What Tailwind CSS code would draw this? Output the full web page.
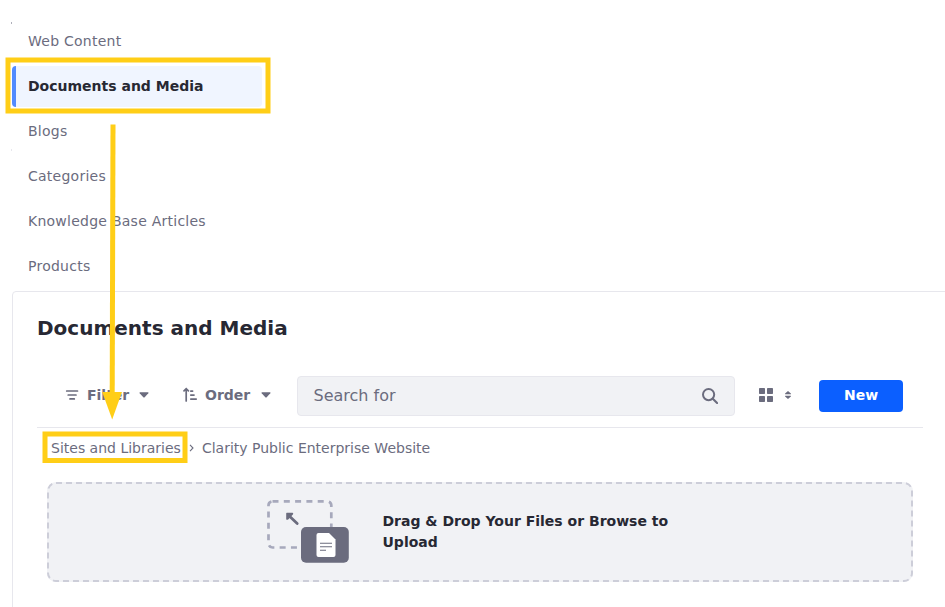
<!DOCTYPE html>
<html lang="en">
<head>
<meta charset="utf-8">
<title>Documents and Media</title>
<script src="https://cdn.jsdelivr.net/npm/@tailwindcss/browser@4"></script>
</head>
<body class="relative h-[607px] w-[945px] overflow-hidden bg-white font-['DejaVu_Sans',sans-serif] text-sm text-[#6b6c7e]">
<nav class="flex flex-col gap-1 pl-3 pt-[21px] tracking-[0.25px]">
  <a class="flex h-[41px] w-[250px] items-center pb-[2px] pl-4">Web Content</a>
  <a class="flex h-[41px] w-[250px] items-center rounded-[4px] border-l-4 border-[#528bff] bg-[#f0f5ff] pb-[2px] pl-3 font-bold tracking-normal text-[#272833]">Documents and Media</a>
  <a class="flex h-[41px] w-[250px] items-center pb-[2px] pl-4">Blogs</a>
  <a class="flex h-[41px] w-[250px] items-center pb-[2px] pl-4">Categories</a>
  <a class="flex h-[41px] w-[250px] items-center pb-[2px] pl-4">Knowledge Base Articles</a>
  <a class="flex h-[41px] w-[250px] items-center pb-[2px] pl-4">Products</a>
</nav>
<main class="ml-3 mt-[4px] h-[330px] w-[960px] rounded-tl-[4px] border border-[#e7e7ed] pl-6 pt-6">
  <h1 class="h-6 text-xl leading-6 font-bold text-[#272833]">Documents and Media</h1>
  <div class="mt-9 flex h-[52px] w-[886px] items-start border-b border-[#e7e7ed] pl-[28px] font-bold">
    <button class="flex h-[38px] w-[118px] items-center">
      <svg class="h-[14px] w-[14px]" viewBox="0 0 14 14" fill="none" stroke="#6b6c7e" stroke-width="1.700" stroke-linecap="round"><path d="M1.700 3h10.800M3.200 7h7.800M5 10.900h4.300"/></svg>
      <span class="ml-2">Filter</span>
      <svg class="ml-[10px] h-[6px] w-[10px]" viewBox="0 0 10 6"><path d="M1 .2h8q.9.2.3 1.100L5.700 5.300q-.7.6-1.400 0L.7 1.300Q.1.400 1 .2z" fill="#6b6c7e"/></svg>
    </button>
    <button class="flex h-[38px] w-[114px] items-center">
      <svg class="h-4 w-[15px]" viewBox="0 0 15 16" fill="none" stroke="#6b6c7e" stroke-width="1.700" stroke-linecap="round"><path d="M3.200 14V2M1 3.800 3.200 1.700 5.400 3.800M7.800 4.100h1.800M7.800 8.100h3.200M7.800 12.100h5.400"/></svg>
      <span class="ml-[7px]">Order</span>
      <svg class="ml-[11px] h-[6px] w-[10px]" viewBox="0 0 10 6"><path d="M1 .2h8q.9.2.3 1.100L5.700 5.300q-.7.6-1.400 0L.7 1.300Q.1.400 1 .2z" fill="#6b6c7e"/></svg>
    </button>
    <div class="flex h-10 w-[438px] items-center justify-between rounded-[4px] border border-[#e7e7ed] bg-[#f1f2f5] pl-[15.5px] pr-4 text-base font-normal">
      <span>Search for</span>
      <svg class="h-4 w-4" viewBox="0 0 16 16" fill="none" stroke="#6b6c7e"><circle cx="6.600" cy="6.600" r="5.600" stroke-width="2"/><path d="m10.800 10.800 4.300 4.300" stroke-width="2.100" stroke-linecap="round"/></svg>
    </div>
    <svg class="ml-6 mt-3 h-[14px] w-[14px]" viewBox="0 0 14 14" fill="#6b6c7e"><rect width="6" height="6" rx=".7"/><rect x="8" width="6" height="6" rx=".7"/><rect y="8" width="6" height="6" rx=".7"/><rect x="8" y="8" width="6" height="6" rx=".7"/></svg>
    <svg class="ml-3 mt-[15px] h-2 w-[6px]" viewBox="0 0 6 8" fill="#6b6c7e"><path d="M3 0 .1 2.600q-.2.6.3.6h5.200q.5 0 .3-.6zM3 8 .1 5.400q-.2-.6.3-.6h5.200q.5 0 .3.6z"/></svg>
    <button class="ml-7 mt-1 flex h-8 w-[84px] items-center justify-center rounded-[4px] bg-[#0b5fff] pb-[2px] text-sm text-white">New</button>
  </div>
  <div class="flex h-10 items-center pl-[14px]">
    <span>Sites and Libraries</span>
    <svg class="ml-2 h-2 w-[5px]" viewBox="0 0 5 8" fill="none" stroke="#6b6c7e" stroke-width="1.1"><path d="m1 .8 3 3.2-3 3.2"/></svg>
    <span class="ml-2">Clarity Public Enterprise Website</span>
  </div>
  <section class="relative ml-[10px] mt-[14px] flex h-[100px] w-[866px] items-start rounded-[9px] bg-[#f1f2f5]">
    <svg class="absolute inset-0 h-[100px] w-[866px]" fill="none" stroke="#cdced9" stroke-width="2"><rect x="1" y="1" width="864" height="98" rx="8" stroke-dasharray="6 4"/></svg>
    <svg class="ml-[218px] mt-[16px] h-[68px] w-[86px]" viewBox="265 498 86 68">
      <rect x="268.500" y="501.300" width="62.800" height="46.200" rx="4" fill="none" stroke="#a7a9bc" stroke-width="2.700" stroke-dasharray="6 5.300"/>
      <path d="m289 515.800 8.200 7.700" stroke="#6b6c7e" stroke-width="2.800" stroke-linecap="round"/><path d="M286.800 512.800h5.800q1.200.6.300 1.700l-4.700 4.900q-1.400 1-2-.2v-5.600q0-.8.600-.8z" fill="#6b6c7e"/>
      <rect x="301" y="527" width="47.800" height="35.800" rx="5" fill="#6b6c7e"/>
      <path d="M318.500 533h10.500l6.500 6.500v15.500q0 2-2 2h-15q-2 0-2-2v-20q0-2 2-2z" fill="#fff"/>
      <path d="M320 543.200h12M320 546.700h12M320 550.300h6" stroke="#6b6c7e" stroke-width="1.100"/>
    </svg>
    <p class="ml-[31.500px] mt-[29px] w-[300px] font-bold leading-[21px] text-[#272833]">Drag &amp; Drop Your Files or Browse to Upload</p>
  </section>
</main>
<svg class="pointer-events-none absolute inset-0 h-[607px] w-[945px]" viewBox="0 0 945 607" fill="none">
  <path d="M11.500 22v2" stroke="#999aa8" stroke-width=".8"/><path d="M11.500 149v2" stroke="#e7e7ed"/>
  <g stroke="#ffce17" stroke-width="5"><rect x="8" y="60" width="260" height="51"/><rect x="45" y="434" width="140" height="26.500"/><path d="M113 124.500 112.200 395"/></g>
  <path d="M102.200 392h19.800l-9.800 27.500z" fill="#ffce17"/>
</svg>
</body>
</html>
